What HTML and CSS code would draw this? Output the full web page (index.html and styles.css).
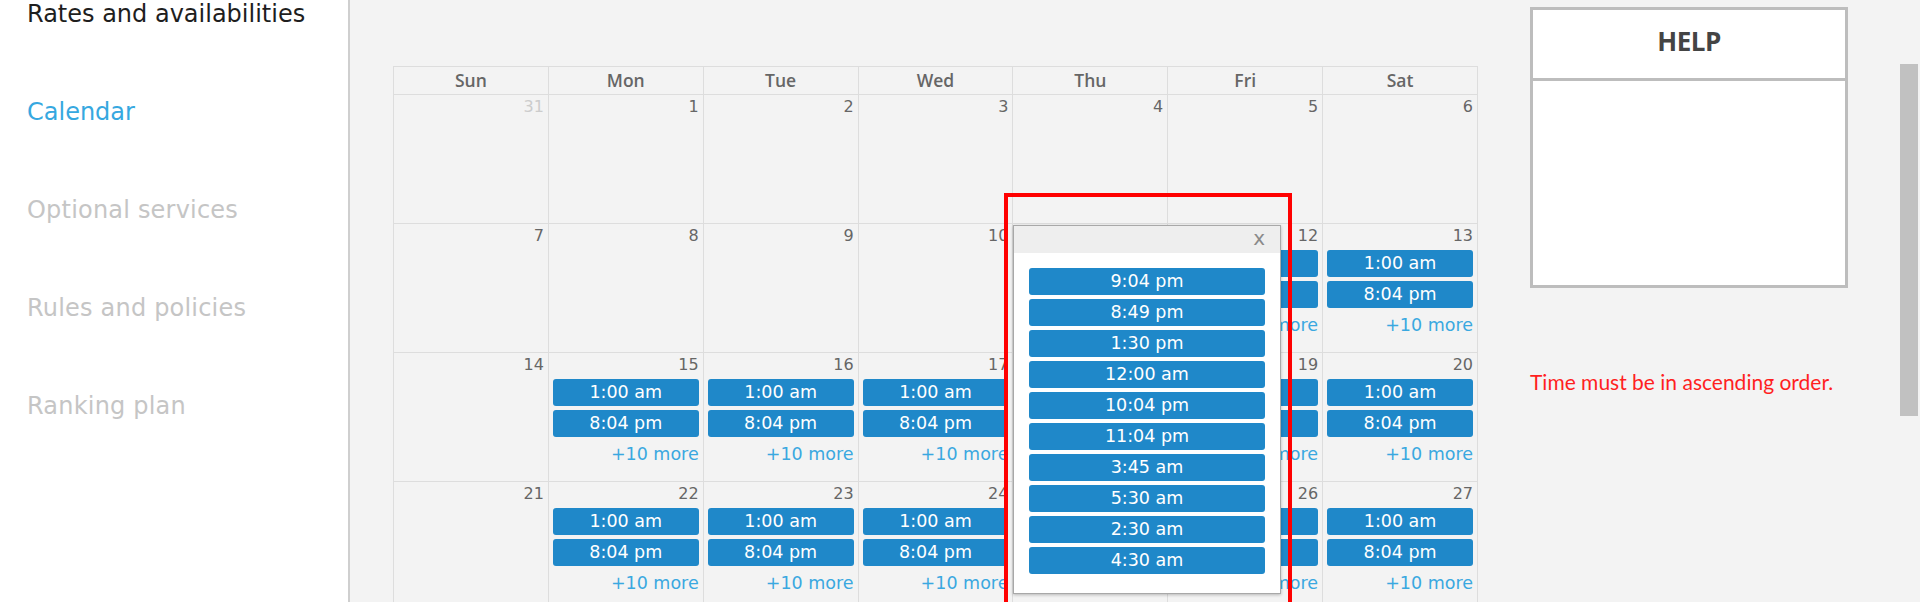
FILE: index.html
```html
<!DOCTYPE html>
<html>
<head>
<meta charset="utf-8">
<link rel="stylesheet" href="styles.css">
</head>
<body>
<div class="page">
  <nav class="sidebar">
    <div class="nav-item nav-title">Rates and availabilities</div>
    <div class="nav-item nav-active">Calendar</div>
    <div class="nav-item nav-muted">Optional services</div>
    <div class="nav-item nav-muted">Rules and policies</div>
    <div class="nav-item nav-muted">Ranking plan</div>
  </nav>
  <main class="main">
    <div class="calendar-wrap">
      <div class="calendar">
        <div class="head">Sun</div><div class="head">Mon</div><div class="head">Tue</div><div class="head">Wed</div><div class="head">Thu</div><div class="head">Fri</div><div class="head">Sat</div>

        <div class="cell"><div class="date other">31</div></div>
        <div class="cell"><div class="date">1</div></div>
        <div class="cell"><div class="date">2</div></div>
        <div class="cell"><div class="date">3</div></div>
        <div class="cell"><div class="date">4</div></div>
        <div class="cell"><div class="date">5</div></div>
        <div class="cell"><div class="date">6</div></div>

        <div class="cell"><div class="date">7</div></div>
        <div class="cell"><div class="date">8</div></div>
        <div class="cell"><div class="date">9</div></div>
        <div class="cell"><div class="date">10</div></div>
        <div class="cell"></div>
        <div class="cell"><div class="date">12</div><div class="ev">1:00 am</div><div class="ev">8:04 pm</div><div class="more">+10 more</div></div>
        <div class="cell"><div class="date">13</div><div class="ev">1:00 am</div><div class="ev">8:04 pm</div><div class="more">+10 more</div></div>

        <div class="cell"><div class="date">14</div></div>
        <div class="cell"><div class="date">15</div><div class="ev">1:00 am</div><div class="ev">8:04 pm</div><div class="more">+10 more</div></div>
        <div class="cell"><div class="date">16</div><div class="ev">1:00 am</div><div class="ev">8:04 pm</div><div class="more">+10 more</div></div>
        <div class="cell"><div class="date">17</div><div class="ev">1:00 am</div><div class="ev">8:04 pm</div><div class="more">+10 more</div></div>
        <div class="cell"></div>
        <div class="cell"><div class="date">19</div><div class="ev">1:00 am</div><div class="ev">8:04 pm</div><div class="more">+10 more</div></div>
        <div class="cell"><div class="date">20</div><div class="ev">1:00 am</div><div class="ev">8:04 pm</div><div class="more">+10 more</div></div>

        <div class="cell"><div class="date">21</div></div>
        <div class="cell"><div class="date">22</div><div class="ev">1:00 am</div><div class="ev">8:04 pm</div><div class="more">+10 more</div></div>
        <div class="cell"><div class="date">23</div><div class="ev">1:00 am</div><div class="ev">8:04 pm</div><div class="more">+10 more</div></div>
        <div class="cell"><div class="date">24</div><div class="ev">1:00 am</div><div class="ev">8:04 pm</div><div class="more">+10 more</div></div>
        <div class="cell"></div>
        <div class="cell"><div class="date">26</div><div class="ev">1:00 am</div><div class="ev">8:04 pm</div><div class="more">+10 more</div></div>
        <div class="cell"><div class="date">27</div><div class="ev">1:00 am</div><div class="ev">8:04 pm</div><div class="more">+10 more</div></div>
      </div>

      <div class="highlight"></div>
      <div class="popover">
        <div class="popover-head"><span class="close">x</span></div>
        <div class="popover-body">
          <div class="ev">9:04 pm</div>
          <div class="ev">8:49 pm</div>
          <div class="ev">1:30 pm</div>
          <div class="ev">12:00 am</div>
          <div class="ev">10:04 pm</div>
          <div class="ev">11:04 pm</div>
          <div class="ev">3:45 am</div>
          <div class="ev">5:30 am</div>
          <div class="ev">2:30 am</div>
          <div class="ev">4:30 am</div>
        </div>
      </div>
    </div>

    <aside class="aside">
      <div class="help">
        <div class="help-head">HELP</div>
        <div class="help-body"></div>
      </div>
      <p class="error">Time must be in ascending order.</p>
    </aside>
  </main>
  <div class="scrollbar"><div class="thumb"></div></div>
</div>
</body>
</html>
```

FILE: styles.css
```css
html, body {
  margin: 0;
  padding: 0;
  height: 602px;
  overflow: hidden;
  background: #f3f3f3;
  font-family: "DejaVu Sans", sans-serif;
}

.page {
  display: flex;
  height: 602px;
}

.sidebar {
  flex: none;
  width: 350px;
  box-sizing: border-box;
  background: #ffffff;
  border-right: 2px solid #cfcfcf;
  display: flex;
  flex-direction: column;
  gap: 70px;
  padding-left: 27px;
}

.nav-item {
  font-size: 24px;
  line-height: 28px;
  white-space: nowrap;
}

.nav-title { color: #1e1e1e; }
.nav-active { color: #36a8e0; }
.nav-muted { color: #c5c5c5; letter-spacing: 0.2px; }

.main {
  flex: 1;
  display: flex;
  align-items: flex-start;
  padding-left: 43px;
}

.calendar-wrap {
  position: relative;
  margin-top: 66px;
  width: 1085px;
  flex: none;
}

.calendar {
  display: grid;
  grid-template-columns: repeat(7, 1fr);
  grid-template-rows: 28px repeat(4, 129px);
  border-top: 1px solid #dddddd;
  border-left: 1px solid #dddddd;
}

.head {
  border-right: 1px solid #dddddd;
  border-bottom: 1px solid #dddddd;
  text-align: center;
  font-family: "Open Sans", sans-serif;
  font-weight: 600;
  font-size: 17.5px;
  line-height: 27px;
  color: #666666;
}

.cell {
  border-right: 1px solid #dddddd;
  border-bottom: 1px solid #dddddd;
  padding: 2px 4px 0 4px;
  display: flex;
  flex-direction: column;
  overflow: hidden;
  min-width: 0;
}

.date {
  text-align: right;
  font-size: 16px;
  line-height: 19px;
  color: #666666;
  margin-bottom: 5px;
}

.date.other { color: #cccccc; }

.ev {
  background: #1f88c9;
  color: #ffffff;
  border-radius: 3px;
  height: 27px;
  line-height: 27px;
  font-size: 17.5px;
  text-align: center;
  white-space: nowrap;
  margin-bottom: 4px;
}

.more {
  text-align: right;
  font-size: 17.5px;
  line-height: 20px;
  color: #3aa8e0;
  margin-top: 3px;
  white-space: nowrap;
}

.highlight {
  position: absolute;
  left: 611px;
  top: 127px;
  width: 288px;
  height: 430px;
  border: 4px solid #ff0000;
  box-sizing: border-box;
}

.popover {
  position: absolute;
  left: 620px;
  top: 159px;
  width: 268px;
  box-sizing: border-box;
  background: #ffffff;
  border: 1px solid #a8a8a8;
  box-shadow: 0 1px 3px rgba(0, 0, 0, 0.25);
}

.popover-head {
  height: 27px;
  background: #eeeeee;
  display: flex;
  justify-content: flex-end;
  align-items: center;
  padding-right: 15px;
}

.close {
  font-size: 20px;
  line-height: 20px;
  color: #8a8a8a;
  margin-top: -4px;
}

.popover-body {
  padding: 15px;
}

.aside {
  margin-left: 52px;
  width: 318px;
  flex: none;
  margin-top: 7px;
}

.help {
  border: 3px solid #bdbdbd;
  background: #ffffff;
}

.help-head {
  height: 68px;
  border-bottom: 3px solid #bdbdbd;
  text-align: center;
  font-family: "Open Sans", sans-serif;
  font-weight: 700;
  font-size: 26px;
  line-height: 62px;
  color: #444444;
  letter-spacing: -0.5px;
}

.help-body {
  height: 204px;
}

.error {
  margin: 81px 0 0 0;
  font-family: "Lato", sans-serif;
  font-size: 21px;
  line-height: 25px;
  color: #ff1f1f;
  white-space: nowrap;
}

.scrollbar {
  width: 25px;
  flex: none;
  padding-top: 64px;
  padding-left: 5px;
  box-sizing: border-box;
}

.thumb {
  width: 18px;
  height: 352px;
  background: #c1c1c1;
}
```
